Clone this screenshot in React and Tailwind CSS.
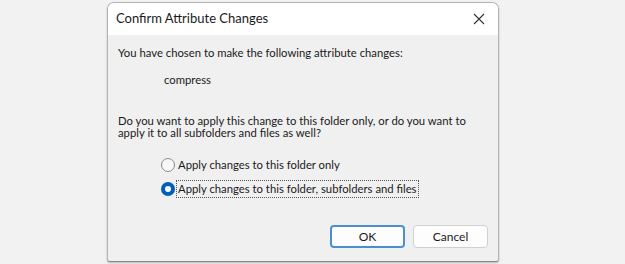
import React from 'react';

// Windows-style "Confirm Attribute Changes" dialog
const Radio = ({ checked, label, focused }) => {
  return (
    <div className="flex items-center h-[18px]">
      {checked ? (
        <span className="w-[14px] h-[14px] rounded-full bg-[#005fb8] flex items-center justify-center">
          <span className="w-[6px] h-[6px] rounded-full bg-white" />
        </span>
      ) : (
        <span className="w-[14px] h-[14px] rounded-full border border-[#8a8a8a] bg-[#f7f7f7]" />
      )}
      <span
        className={
          focused
            ? 'ml-[1px] px-[1px] h-[18px] flex items-center border border-dotted border-[#555]'
            : 'ml-[2px] px-[1px] h-[18px] flex items-center'
        }
      >
        {label}
      </span>
    </div>
  );
};

export default function App() {
  return (
    <div
      className="w-[625px] h-[264px] bg-[#f2f2f2] pl-[107px] pt-[2px] text-[11.3px] text-[#1a1a1a]"
      style={{ fontFamily: 'Lato, "Noto Sans", sans-serif' }}
    >
      <div className="w-[392px] h-[260px] rounded-t-[7px] rounded-b-[3px] border border-[#b4b4b4] border-b-[#8a8a8a] bg-[#f0f0f0] overflow-hidden flex flex-col shadow-[0_1px_2px_rgba(0,0,0,0.25)]">
        {/* Title bar */}
        <div className="h-[32px] bg-white flex items-center justify-between pl-[8px] pr-[10px]">
          <span className="text-[13px] text-[#1a1a1a]">Confirm Attribute Changes</span>
          <svg width="12" height="12" viewBox="0 0 12 12" className="mr-[3px]">
            <path d="M1 1 L11 11 M11 1 L1 11" stroke="#333" strokeWidth="1.1" />
          </svg>
        </div>

        {/* Body */}
        <div className="flex-1 flex flex-col pl-[10px] pr-[10px]">
          <p className="mt-[10px] leading-[16px]">You have chosen to make the following attribute changes:</p>
          <p className="mt-[11px] ml-[46px] leading-[16px]">compress</p>
          <div className="mt-[27px] flex flex-col whitespace-nowrap">
            <p className="leading-[12px]">Do you want to apply this change to this folder only, or do you want to</p>
            <p className="leading-[12px]">apply it to all subfolders and files as well?</p>
          </div>
          <div className="mt-[17px] ml-[43px] flex flex-col gap-[6px]">
            <Radio label="Apply changes to this folder only" />
            <Radio checked focused label="Apply changes to this folder, subfolders and files" />
          </div>
          <div className="mt-[27px] flex justify-end gap-[8px]">
            <button className="w-[75px] h-[23px] rounded-[4px] bg-[#fdfdfd] border-2 border-[#4a8fcf] text-[12px] text-[#1a1a1a]">
              OK
            </button>
            <button className="w-[75px] h-[23px] rounded-[4px] bg-[#fdfdfd] border border-[#d0d0d0] text-[12px] text-[#1a1a1a]">
              Cancel
            </button>
          </div>
        </div>
      </div>
    </div>
  );
}
